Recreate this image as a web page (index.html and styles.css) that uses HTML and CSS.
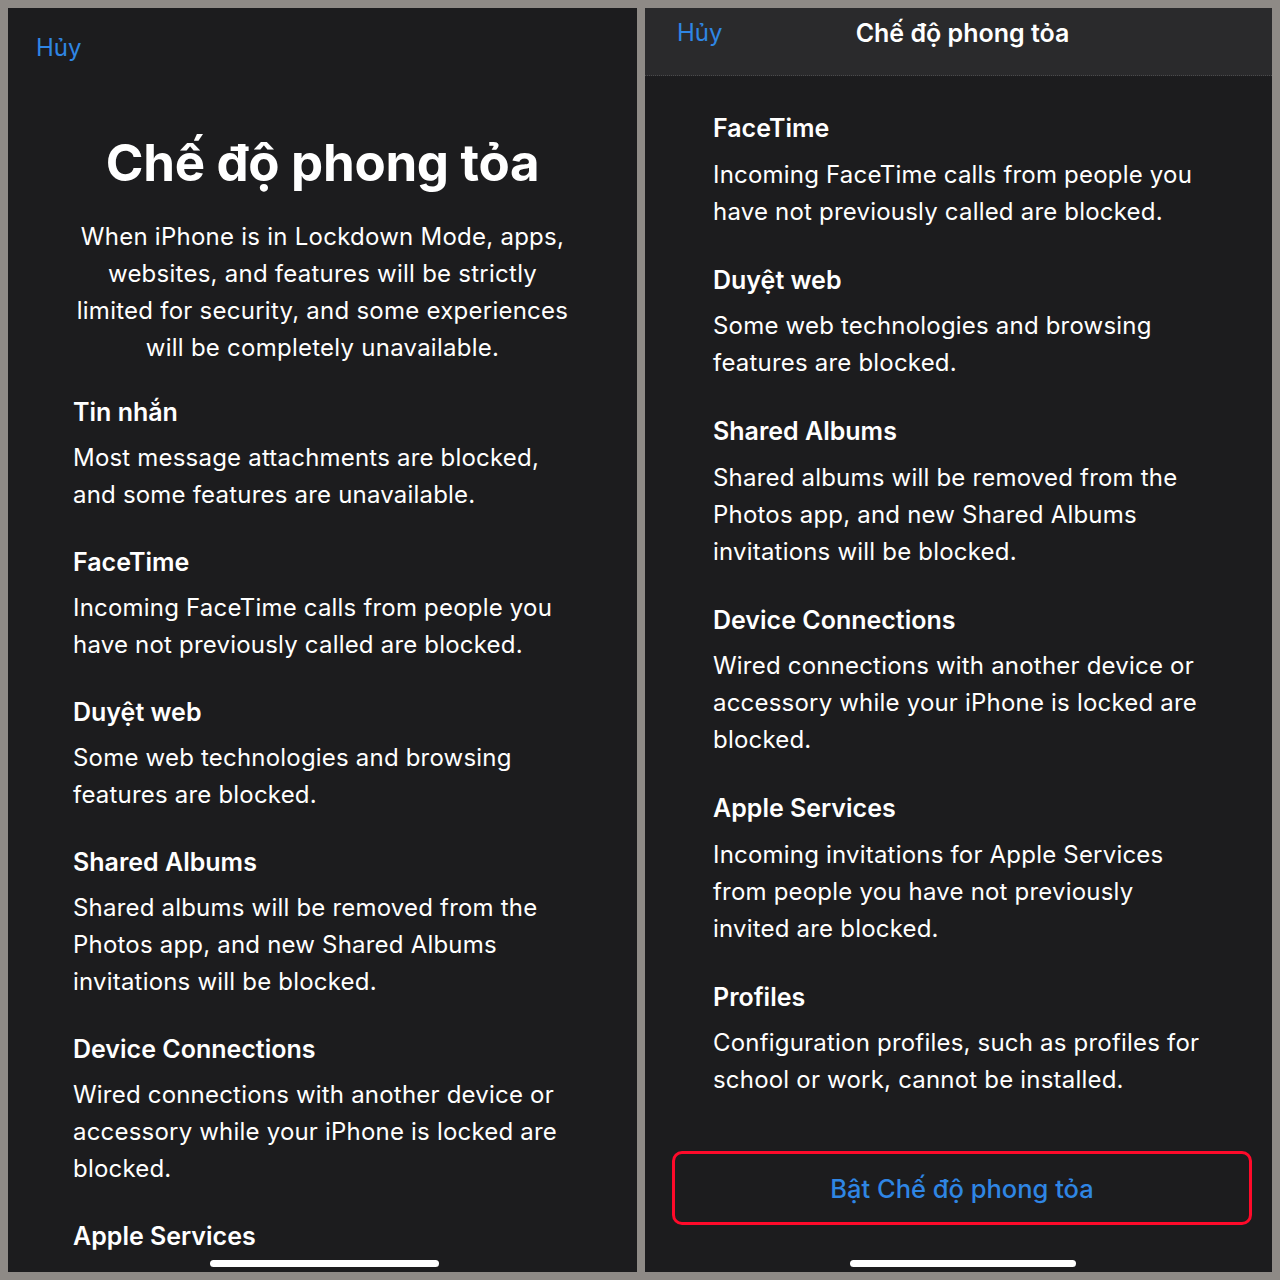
FILE: index.html
```html
<!DOCTYPE html>
<html lang="vi">
<head>
<meta charset="utf-8">
<title>Chế độ phong tỏa</title>
<link rel="stylesheet" href="styles.css">
</head>
<body>
<div class="screens">
  <section class="panel panel-left">
    <div class="cancel-row"><span class="link">Hủy</span></div>
    <h1 class="big-title">Chế độ phong tỏa</h1>
    <p class="intro">When iPhone is in Lockdown Mode, apps,<br>websites, and features will be strictly<br>limited for security, and some experiences<br>will be completely unavailable.</p>
    <div class="items">
      <div class="item"><h2>Tin nhắn</h2><p>Most message attachments are blocked,<br>and some features are unavailable.</p></div>
      <div class="item"><h2>FaceTime</h2><p>Incoming FaceTime calls from people you<br>have not previously called are blocked.</p></div>
      <div class="item"><h2>Duyệt web</h2><p>Some web technologies and browsing<br>features are blocked.</p></div>
      <div class="item"><h2>Shared Albums</h2><p>Shared albums will be removed from the<br>Photos app, and new Shared Albums<br>invitations will be blocked.</p></div>
      <div class="item"><h2>Device Connections</h2><p>Wired connections with another device or<br>accessory while your iPhone is locked are<br>blocked.</p></div>
      <div class="item"><h2>Apple Services</h2><p>Incoming invitations for Apple Services<br>from people you have not previously</p></div>
    </div>
    <div class="home-bar"></div>
  </section>
  <section class="panel panel-right">
    <header class="nav">
      <span class="link nav-cancel">Hủy</span>
      <span class="nav-title">Chế độ phong tỏa</span>
    </header>
    <div class="items items-right">
      <div class="item"><h2>FaceTime</h2><p>Incoming FaceTime calls from people you<br>have not previously called are blocked.</p></div>
      <div class="item"><h2>Duyệt web</h2><p>Some web technologies and browsing<br>features are blocked.</p></div>
      <div class="item"><h2>Shared Albums</h2><p>Shared albums will be removed from the<br>Photos app, and new Shared Albums<br>invitations will be blocked.</p></div>
      <div class="item"><h2>Device Connections</h2><p>Wired connections with another device or<br>accessory while your iPhone is locked are<br>blocked.</p></div>
      <div class="item"><h2>Apple Services</h2><p>Incoming invitations for Apple Services<br>from people you have not previously<br>invited are blocked.</p></div>
      <div class="item"><h2>Profiles</h2><p>Configuration profiles, such as profiles for<br>school or work, cannot be installed.</p></div>
    </div>
    <div class="button-wrap">
      <div class="enable-btn">Bật Chế độ phong tỏa</div>
    </div>
    <div class="home-bar home-bar-right"></div>
  </section>
</div>
</body>
</html>
```

FILE: styles.css
```css
html, body {
  margin: 0;
  padding: 0;
}
body {
  background: #8e8a86;
  font-family: Inter, "Noto Sans", "DejaVu Sans", sans-serif;
  color: #ffffff;
  width: 1280px;
  height: 1280px;
  overflow: hidden;
}
.screens {
  display: flex;
  gap: 8px;
  padding: 8px;
  height: 1264px;
}
.panel {
  position: relative;
  background: #1c1c1e;
  height: 1264px;
  overflow: hidden;
  display: flex;
  flex-direction: column;
}
.panel-left {
  width: 629px;
}
.panel-right {
  width: 627px;
}
.link {
  color: #2f86e4;
  font-size: 24px;
  line-height: 30px;
}
.cancel-row {
  padding: 25px 0 0 28px;
  height: 30px;
}
.big-title {
  margin: 70px 0 0;
  text-align: center;
  font-size: 51px;
  line-height: 60px;
  font-weight: 700;
  letter-spacing: -0.3px;
}
.intro {
  margin: 25px auto 0;
  text-align: center;
  font-size: 24px;
  line-height: 37px;
  font-weight: 400;
  letter-spacing: 0.25px;
  white-space: nowrap;
}
.items {
  display: flex;
  flex-direction: column;
  gap: 31px;
  padding: 28px 0 0 65px;
}
.item h2 {
  margin: 0;
  font-size: 25px;
  line-height: 37px;
  font-weight: 600;
}
.item p {
  margin: 8px 0 0;
  font-size: 24px;
  line-height: 37px;
  font-weight: 400;
  letter-spacing: 0.2px;
  white-space: nowrap;
}
.nav {
  position: relative;
  background: #2a2a2c;
  height: 67px;
  border-bottom: 1px dotted #4a4a4c;
  display: flex;
  align-items: center;
  justify-content: center;
  flex-shrink: 0;
}
.nav-cancel {
  position: absolute;
  left: 32px;
  top: 10px;
}
.nav-title {
  font-size: 25px;
  font-weight: 600;
  line-height: 30px;
  margin-top: -18px;
  margin-left: 8px;
}
.items-right {
  padding: 34px 0 0 68px;
  gap: 32px;
}
.items-right .item p {
  margin-top: 8.5px;
}
.button-wrap {
  padding: 53px 20px 0 27px;
}
.enable-btn {
  height: 68px;
  border: 3px solid #ff0a2a;
  border-radius: 10px;
  display: flex;
  align-items: center;
  justify-content: center;
  color: #2f86e4;
  font-size: 25.5px;
  font-weight: 500;
}
.home-bar {
  position: absolute;
  left: 202px;
  bottom: 5px;
  width: 229px;
  height: 7px;
  border-radius: 4px;
  background: #ffffff;
}
.home-bar-right {
  left: 205px;
  width: 226px;
}
```
